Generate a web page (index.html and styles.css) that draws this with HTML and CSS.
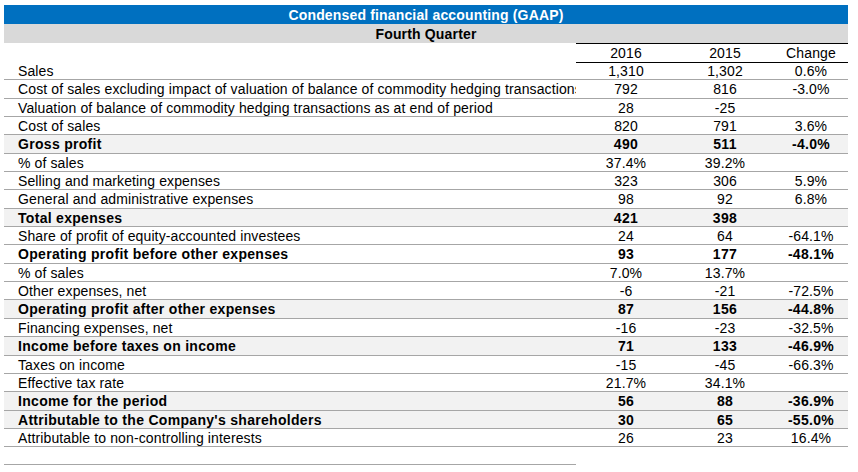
FILE: index.html
```html
<!DOCTYPE html>
<html>
<head>
<meta charset="utf-8">
<title>Condensed financial accounting (GAAP)</title>
<link rel="stylesheet" href="styles.css">
</head>
<body>
<div class="sheet">
  <div class="title">Condensed financial accounting (GAAP)</div>
  <div class="subtitle">Fourth Quarter</div>
  <div class="head">
    <div class="label"></div>
    <div class="num">2016</div>
    <div class="num">2015</div>
    <div class="num">Change</div>
  </div>
  <div class="row"><div class="label">Sales</div><div class="num">1,310</div><div class="num">1,302</div><div class="num">0.6%</div></div>
  <div class="row"><div class="label">Cost of sales excluding impact of valuation of balance of commodity hedging transactions</div><div class="num">792</div><div class="num">816</div><div class="num">-3.0%</div></div>
  <div class="row"><div class="label">Valuation of balance of commodity hedging transactions as at end of period</div><div class="num">28</div><div class="num">-25</div><div class="num"></div></div>
  <div class="row"><div class="label">Cost of sales</div><div class="num">820</div><div class="num">791</div><div class="num">3.6%</div></div>
  <div class="row total"><div class="label">Gross profit</div><div class="num">490</div><div class="num">511</div><div class="num">-4.0%</div></div>
  <div class="row"><div class="label">% of sales</div><div class="num">37.4%</div><div class="num">39.2%</div><div class="num"></div></div>
  <div class="row"><div class="label">Selling and marketing expenses</div><div class="num">323</div><div class="num">306</div><div class="num">5.9%</div></div>
  <div class="row"><div class="label">General and administrative expenses</div><div class="num">98</div><div class="num">92</div><div class="num">6.8%</div></div>
  <div class="row total"><div class="label">Total expenses</div><div class="num">421</div><div class="num">398</div><div class="num"></div></div>
  <div class="row"><div class="label">Share of profit of equity-accounted investees</div><div class="num">24</div><div class="num">64</div><div class="num">-64.1%</div></div>
  <div class="row strong"><div class="label">Operating profit before other expenses</div><div class="num">93</div><div class="num">177</div><div class="num">-48.1%</div></div>
  <div class="row"><div class="label">% of sales</div><div class="num">7.0%</div><div class="num">13.7%</div><div class="num"></div></div>
  <div class="row"><div class="label">Other expenses, net</div><div class="num">-6</div><div class="num">-21</div><div class="num">-72.5%</div></div>
  <div class="row total"><div class="label">Operating profit after other expenses</div><div class="num">87</div><div class="num">156</div><div class="num">-44.8%</div></div>
  <div class="row"><div class="label">Financing expenses, net</div><div class="num">-16</div><div class="num">-23</div><div class="num">-32.5%</div></div>
  <div class="row total"><div class="label">Income before taxes on income</div><div class="num">71</div><div class="num">133</div><div class="num">-46.9%</div></div>
  <div class="row"><div class="label">Taxes on income</div><div class="num">-15</div><div class="num">-45</div><div class="num">-66.3%</div></div>
  <div class="row"><div class="label">Effective tax rate</div><div class="num">21.7%</div><div class="num">34.1%</div><div class="num"></div></div>
  <div class="row total"><div class="label">Income for the period</div><div class="num">56</div><div class="num">88</div><div class="num">-36.9%</div></div>
  <div class="row total"><div class="label">Attributable to the Company's shareholders</div><div class="num">30</div><div class="num">65</div><div class="num">-55.0%</div></div>
  <div class="row"><div class="label">Attributable to non-controlling interests</div><div class="num">26</div><div class="num">23</div><div class="num">16.4%</div></div>
  <div class="foot"><div class="label"></div></div>
</div>
</body>
</html>
```
FILE: styles.css
```css
html, body {
  margin: 0;
  padding: 0;
  background: #ffffff;
}
body {
  font-family: "Liberation Sans", Arial, sans-serif;
  font-size: 14px;
  color: #000000;
  letter-spacing: 0.12px;
}
.sheet {
  width: 844px;
  padding: 5px 0 0 4px;
}
.title {
  height: 19px;
  line-height: 20px;
  background: #0070c0;
  color: #ffffff;
  font-weight: bold;
  text-align: center;
  letter-spacing: 0.16px;
}
.subtitle {
  height: 19px;
  line-height: 20px;
  background: #d9d9d9;
  font-weight: bold;
  text-align: center;
  letter-spacing: 0.16px;
}
.head, .row, .foot {
  display: grid;
  grid-template-columns: 572px 100px 98px 74px;
}
.head {
  height: 19px;
  line-height: 18px;
}
.head .num {
  border-top: 1px solid #000000;
  border-bottom: 1px solid #000000;
}
.row {
  box-sizing: border-box;
  height: 18.35px;
  line-height: 18px;
  border-bottom: 1px solid #a6a6a6;
}
.label {
  padding-left: 14px;
  white-space: nowrap;
  overflow: hidden;
}
.num {
  text-align: center;
  white-space: nowrap;
}
.total {
  background: #f2f2f2;
  font-weight: bold;
  letter-spacing: 0.3px;
}
.strong {
  font-weight: bold;
  letter-spacing: 0.3px;
}
.foot {
  height: 18px;
}
.foot .label {
  border-bottom: 1px solid #a6a6a6;
}
```
